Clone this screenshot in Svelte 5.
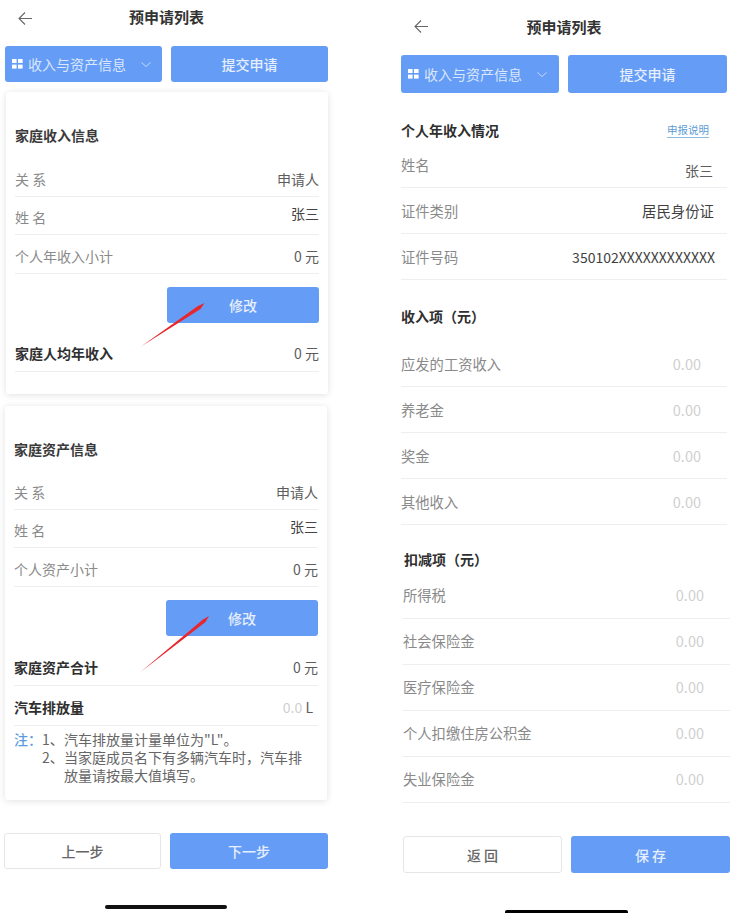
<script>
  const incomeRows = ["应发的工资收入", "养老金", "奖金", "其他收入"];
  const deductRows = ["所得税", "社会保险金", "医疗保险金", "个人扣缴住房公积金", "失业保险金"];
</script>

{#snippet header()}
  <header class="header">
    <svg class="back" width="14" height="13" viewBox="0 0 14 13" fill="none" stroke="#666" stroke-width="1.1">
      <path d="M14 6.5H1M7 .5l-6 6 6 6" />
    </svg>
    <h1>预申请列表</h1>
  </header>
{/snippet}

{#snippet actions()}
  <div class="actions">
    <button class="btn select">
      <svg width="11" height="10" viewBox="0 0 11 10" fill="#fff">
        <rect x="0" y="0" width="4.6" height="4" />
        <rect x="6" y="0" width="4.6" height="4" />
        <rect x="0" y="5.6" width="4.6" height="4" />
        <rect x="6" y="5.6" width="4.6" height="4" />
      </svg>
      <span>收入与资产信息</span>
      <svg class="chev" width="10" height="5" viewBox="0 0 10 5" fill="none" stroke="#cfe0fb" stroke-width="0.9">
        <path d="M0.5 0.5L5 4.5l4.5-4" />
      </svg>
    </button>
    <button class="btn">提交申请</button>
  </div>
{/snippet}

{#snippet row(label, value, bold = false)}
  <div class="row" class:bold>
    <span class="label">{label}</span>
    <span class="value">{value}</span>
  </div>
{/snippet}

<main class="page">
  <section class="col left">
    {@render header()}
    {@render actions()}

    <div class="card first">
      <h2>家庭收入信息</h2>
      {@render row("关 系", "申请人")}
      <div class="row">
        <span class="label">姓 名</span>
        <span class="value raised">张三</span>
      </div>
      {@render row("个人年收入小计", "0 元")}
      <div class="edit"><button class="btn">修改</button></div>
      {@render row("家庭人均年收入", "0 元", true)}
    </div>

    <div class="card second">
      <h2>家庭资产信息</h2>
      {@render row("关 系", "申请人")}
      <div class="row">
        <span class="label">姓 名</span>
        <span class="value raised">张三</span>
      </div>
      {@render row("个人资产小计", "0 元")}
      <div class="edit"><button class="btn">修改</button></div>
      {@render row("家庭资产合计", "0 元", true)}
      <div class="row bold short">
        <span class="label">汽车排放量</span>
        <span class="value litre"><i>0.0</i> L</span>
      </div>
      <div class="note">
        <span class="note-tag">注：</span>
        <div class="note-list">
          <span>1、</span><span>汽车排放量计量单位为"L"。</span>
          <span>2、</span><span>当家庭成员名下有多辆汽车时，汽车排放量请按最大值填写。</span>
        </div>
      </div>
    </div>

    <div class="footer">
      <button class="btn ghost">上一步</button>
      <button class="btn">下一步</button>
    </div>
    <div class="home"></div>

    <svg class="arrows" width="367" height="917" viewBox="0 0 367 917">
      <path d="M141 346.500L198 306l6.500-3-4 6z" fill="#e8262c" />
      <path d="M140 672.500L203 619.500l6-3.500-3.500 6z" fill="#e8262c" />
    </svg>
  </section>

  <section class="col right">
    {@render header()}
    {@render actions()}

    <div class="head-row">
      <h3>个人年收入情况</h3>
      <a class="help" href="#help">申报说明</a>
    </div>
    <div class="row tall">
      <span class="label">姓名</span>
      <span class="value lowered">张三</span>
    </div>
    <div class="row tall"><span class="label">证件类别</span><span class="value dark">居民身份证</span></div>
    <div class="row tall"><span class="label">证件号码</span><span class="value dark id">350102XXXXXXXXXXXX</span></div>

    <h3 class="sub">收入项（元）</h3>
    {#each incomeRows as name}
      <div class="row tall"><span class="label">{name}</span><span class="value zero">0.00</span></div>
    {/each}

    <div class="deduct">
      <h3 class="sub">扣减项（元）</h3>
      {#each deductRows as name}
        <div class="row tall"><span class="label">{name}</span><span class="value zero">0.00</span></div>
      {/each}

      <div class="footer">
        <button class="btn ghost">返 回</button>
        <button class="btn">保 存</button>
      </div>
    </div>
    <div class="home"></div>
  </section>
</main>

<style>
  :global(body) {
    background: #fff;
  }

  .page {
    display: grid;
    grid-template-columns: 367px 367px;
    height: 917px;
    overflow: hidden;
    font-family: "Noto Sans CJK SC", "Noto Sans", sans-serif;
    font-size: 14px;
    color: #555;
  }

  .col {
    position: relative;
  }
  .left {
    padding-left: 5px;
    width: 323px;
  }
  .right {
    padding: 9px 0 0 34px;
    width: 326px;
  }

  .header {
    position: relative;
    height: 36px;
    box-sizing: border-box;
    padding-bottom: 4px;
    display: flex;
    align-items: center;
    justify-content: center;
  }
  .right .header {
    padding-bottom: 2px;
  }
  .header h1 {
    margin: 0;
    font-size: 15px;
    font-weight: 700;
    color: #333;
  }
  .back {
    position: absolute;
    left: 13px;
    top: 12px;
  }
  .right .back {
    top: 11px;
  }

  .actions {
    display: grid;
    grid-template-columns: 157px 157px;
    gap: 9px;
    margin-top: 10px;
  }
  .right .actions {
    grid-template-columns: 158px 159px;
  }

  .btn {
    height: 36px;
    border: 0;
    border-radius: 3px;
    padding: 0;
    background: #659cf5;
    color: #e6effd;
    font: inherit;
    font-weight: 500;
  }
  .right .actions .btn {
    height: 38px;
  }
  .select {
    display: flex;
    align-items: center;
    padding-left: 7px;
    gap: 5px;
    color: #dbe7fc;
    font-weight: 400;
  }
  .chev {
    margin-left: 10px;
  }

  .card {
    box-sizing: border-box;
    width: 322px;
    background: #fff;
    border-radius: 3px;
    box-shadow: 0 1px 7px rgba(0, 0, 0, 0.12);
    padding: 31px 9px 22px;
  }
  .first {
    margin: 10px 0 0 1px;
  }
  .second {
    margin-top: 12px;
    padding-bottom: 16px;
  }
  .card h2 {
    margin: 0 0 11px;
    height: 24px;
    line-height: 24px;
    font-size: 14px;
    font-weight: 700;
    color: #3a3a3a;
  }
  .second h2 {
    margin-bottom: 10px;
  }

  .row {
    display: flex;
    align-items: center;
    justify-content: space-between;
    height: 38.5px;
    box-sizing: border-box;
    border-bottom: 1px solid #eceef0;
  }
  .card .row {
    padding-top: 4px;
  }
  .label {
    color: #8a8a8a;
  }
  .value {
    color: #5c5c5c;
  }
  .raised {
    color: #444;
    margin-bottom: 8px;
  }
  .card .bold {
    padding-top: 1px;
  }
  .bold .label {
    color: #2f2f2f;
    font-weight: 700;
  }
  .card .short {
    height: 40px;
    padding-top: 2px;
  }
  .litre {
    padding-right: 5px;
  }
  .litre i {
    font-style: normal;
    color: #d0d0d0;
  }

  .edit {
    display: flex;
    justify-content: flex-end;
    margin: 13px 0 11px;
  }
  .second .edit {
    margin-bottom: 12px;
  }
  .edit .btn {
    width: 152px;
  }

  .note {
    display: flex;
    margin-top: 4px;
    line-height: 18px;
    color: #666;
  }
  .note-tag {
    width: 28px;
    flex: none;
    color: #5c9be0;
    font-weight: 500;
  }
  .note-list {
    display: grid;
    grid-template-columns: 22px 1fr;
    width: 262px;
  }

  .footer {
    display: grid;
    grid-template-columns: 157px 158px;
    gap: 9px;
    margin: 33px 0 0 -1px;
  }
  .ghost {
    background: #fff;
    border: 1px solid #e6e6e6;
    color: #666;
  }

  .home {
    position: absolute;
    left: 105px;
    top: 905px;
    width: 122px;
    height: 4px;
    border-radius: 2px;
    background: #111;
  }
  .right .home {
    left: 138px;
    top: 910px;
    width: 123px;
    height: 3px;
    border-radius: 2px 2px 0 0;
    background: #000;
  }

  .arrows {
    position: absolute;
    left: 0;
    top: 0;
    pointer-events: none;
  }

  .head-row {
    display: flex;
    align-items: center;
    justify-content: space-between;
    box-sizing: border-box;
    height: 49px;
    padding: 25px 18px 0 0;
  }
  h3 {
    margin: 0;
    font-size: 14px;
    font-weight: 700;
    color: #2f2f2f;
  }
  .help {
    font-size: 10.5px;
    color: #5b9bd5;
    border-bottom: 1px solid #8fbbe0;
    line-height: 14px;
    text-decoration: none;
  }
  .tall {
    height: 46px;
  }
  .tall .label {
    font-size: 14.3px;
  }
  .tall .value {
    margin-right: 14px;
  }
  .lowered {
    margin-top: 10px;
  }
  .tall .dark {
    margin-right: 13px;
    font-size: 14.4px;
    color: #3f3f3f;
  }
  .tall .id {
    margin-right: 12px;
    font-size: 14px;
  }
  .tall .zero {
    margin-right: 26px;
    font-size: 14.5px;
    color: #cfcfcf;
  }
  .sub {
    height: 61px;
    line-height: 72px;
  }

  .deduct {
    margin-left: 2px;
    width: 327px;
  }
  .deduct .sub {
    height: 48px;
    line-height: 68px;
    margin-left: 1px;
  }
  .deduct .tall {
    padding-bottom: 2px;
  }
  .deduct .footer {
    grid-template-columns: 159px 159px;
    margin: 33px 0 0;
  }
  .deduct .footer .btn {
    height: 37px;
  }
</style>
